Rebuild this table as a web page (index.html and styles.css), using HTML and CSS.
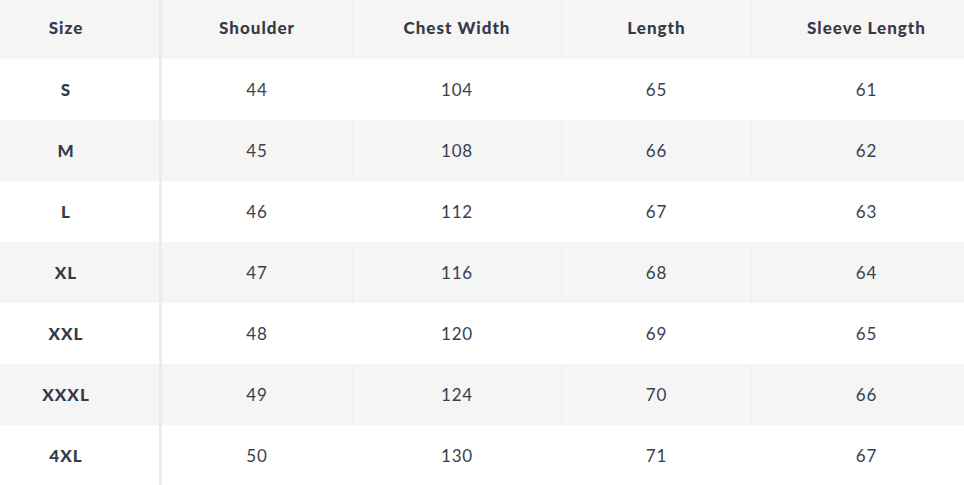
FILE: index.html
```html
<!DOCTYPE html>
<html>
<head>
<meta charset="utf-8">
<link rel="stylesheet" href="styles.css">
</head>
<body>
<div class="wrap">
<table class="size-table">
  <thead>
    <tr><th class="first">Size</th><th>Shoulder</th><th>Chest Width</th><th>Length</th><th>Sleeve Length</th></tr>
  </thead>
  <tbody>
    <tr><th class="first">S</th><td>44</td><td>104</td><td>65</td><td>61</td></tr>
    <tr><th class="first">M</th><td>45</td><td>108</td><td>66</td><td>62</td></tr>
    <tr><th class="first">L</th><td>46</td><td>112</td><td>67</td><td>63</td></tr>
    <tr><th class="first">XL</th><td>47</td><td>116</td><td>68</td><td>64</td></tr>
    <tr><th class="first">XXL</th><td>48</td><td>120</td><td>69</td><td>65</td></tr>
    <tr><th class="first">XXXL</th><td>49</td><td>124</td><td>70</td><td>66</td></tr>
    <tr><th class="first">4XL</th><td>50</td><td>130</td><td>71</td><td>67</td></tr>
  </tbody>
</table>
</div>
</body>
</html>
```
FILE: styles.css
```css
html, body {
  margin: 0;
  padding: 0;
  background: #ffffff;
  overflow: hidden;
}
.wrap {
  width: 964px;
  height: 485px;
  overflow: hidden;
}
.size-table {
  border-collapse: collapse;
  table-layout: fixed;
  width: 981px;
  font-family: Lato, "Open Sans", sans-serif;
  font-size: 17px;
  color: #353a48;
}
.size-table th,
.size-table td {
  text-align: center;
  padding: 0;
  height: 61px;
  border-left: 1px solid #efefef;
}
.size-table thead th {
  height: 55px;
  padding-bottom: 4px;
  font-weight: 900;
  letter-spacing: 1px;
}
.size-table tbody th {
  font-weight: 900;
  letter-spacing: 1px;
}
.size-table td {
  font-weight: 400;
  letter-spacing: 0.8px;
  color: #3a3f4d;
}
.size-table thead tr,
.size-table tbody tr:nth-child(even) {
  background: #f5f5f5;
}
.size-table tbody tr:nth-child(odd) td {
  border-left-color: #ffffff;
}
.size-table .first {
  width: 132px;
  padding-right: 27px;
  border-left: none;
  border-right: 3px solid #ececec;
}
.size-table th:nth-child(2),
.size-table td:nth-child(2) { width: 190px; border-left: none; }
.size-table th:nth-child(3),
.size-table td:nth-child(3) { width: 208px; }
.size-table th:nth-child(4),
.size-table td:nth-child(4) { width: 189px; }
.size-table th:nth-child(5),
.size-table td:nth-child(5) { width: 229px; }
```
